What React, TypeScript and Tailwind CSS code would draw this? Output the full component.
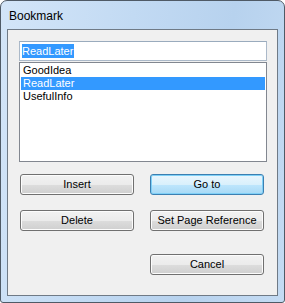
import React from "react";

const font = { fontFamily: '"Liberation Sans", Arial, sans-serif' };

function Button({ label, primary }: { label: string; primary?: boolean }) {
  return (
    <button
      className={
        primary
          ? "w-[114px] h-[21px] rounded-[3px] border border-[#3c7fb1] bg-[linear-gradient(#eaf6fd_0%,#d9f0fc_50%,#bee6fd_50%,#a7d9f5_100%)] shadow-[inset_0_0_0_1px_#7fd0f7] text-[11px] leading-none text-black"
          : "w-[114px] h-[21px] rounded-[3px] border border-[#707070] bg-[linear-gradient(#f2f2f2_0%,#ebebeb_50%,#dddddd_50%,#cfcfcf_100%)] shadow-[inset_0_0_0_1px_#fcfcfc] text-[11px] leading-none text-black"
      }
      style={font}
    >
      {label}
    </button>
  );
}

export default function App() {
  const items = ["GoodIdea", "ReadLater", "UsefulInfo"];
  return (
    <div
      className="w-[285px] h-[303px] flex flex-col rounded-t-[7px] rounded-b-[3px] border border-[#4f5a66] bg-[linear-gradient(100deg,#d3e5f8_0%,#c2daf3_40%,#b7d2ee_70%,#c4dbf3_100%)] px-[6px] pb-[6px] overflow-hidden"
      style={font}
    >
      <div className="h-[28px] flex items-center pl-[2px] pt-[2px] text-[12px] text-black">
        Bookmark
      </div>
      <div className="flex-1 border border-[#6f7a86] bg-[#f0f0f0] flex flex-col pl-[11px] pr-[10px] pt-[11px]">
        <div className="h-[20px] w-[248px] border border-[#abb9c9] border-t-[#9aabbd] bg-white flex items-center pl-[2px]">
          <span className="bg-[#3399ff] text-white text-[11px] leading-[14px] pr-[1px]">
            ReadLater
          </span>
        </div>
        <div className="mt-[1px] h-[100px] w-[248px] border border-[#828790] bg-white p-[1px]">
          {items.map((it) => (
            <div
              key={it}
              className={
                it === "ReadLater"
                  ? "h-[13px] bg-[#3399ff] text-white text-[11px] leading-[13px] pl-[2px]"
                  : "h-[13px] text-black text-[11px] leading-[13px] pl-[2px]"
              }
            >
              {it}
            </div>
          ))}
        </div>
        <div className="mt-[12px] flex gap-[16px] pl-[1px]">
          <Button label="Insert" />
          <Button label="Go to" primary />
        </div>
        <div className="mt-[15px] flex gap-[16px] pl-[1px]">
          <Button label="Delete" />
          <Button label="Set Page Reference" />
        </div>
        <div className="mt-[23px] flex pl-[131px]">
          <Button label="Cancel" />
        </div>
      </div>
    </div>
  );
}
